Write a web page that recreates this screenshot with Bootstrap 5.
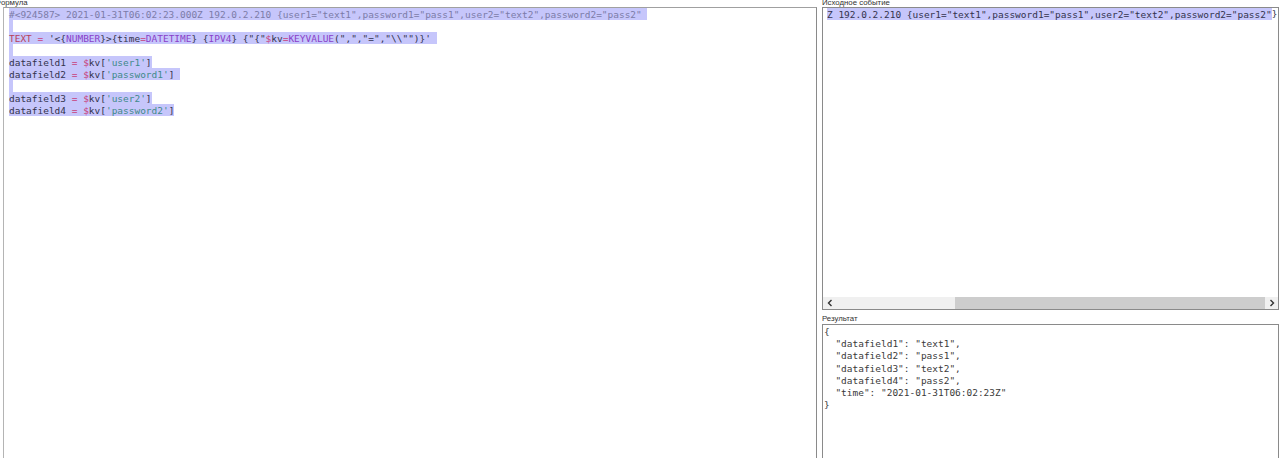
<!DOCTYPE html>
<html lang="ru"><head><meta charset="utf-8"><title>Формула</title>
<link href="https://cdn.jsdelivr.net/npm/bootstrap@5.3.0/dist/css/bootstrap.min.css" rel="stylesheet">
<style>
html,body{height:458px;overflow:hidden;background:#fff}
.shell{height:458px;overflow:hidden;align-items:stretch}
.pane-left{width:817px;flex:none;padding-left:3px}
.pane-right{width:457px;flex:none;margin-left:5px}
.cap{height:7px;font:7.8px/5px "Liberation Sans",sans-serif;color:#333;white-space:nowrap;overflow:visible}
.cap-l{margin-left:-8px}
.cap-res{height:14px;line-height:17px}
.editor{flex:1 1 0;min-height:0;border:1px solid #a0a0a0;border-bottom:0;font:9.47px/12px "DejaVu Sans Mono",monospace;color:#333;white-space:pre;overflow:hidden}
.ed-left{border-right:1px solid #8a8a8a;border-left:1px solid #b4b4b4;padding-left:5px}
.ln{height:12px;display:block}
.sel{background:#c6c6fb;display:inline-block;height:12px;line-height:13px;vertical-align:top}
.blank{width:4px}
.c-gray{color:#7c7ca8}.c-red{color:#b8405a}.c-pur{color:#8a3fc8}.c-pink{color:#c8407a}.c-teal{color:#3f8a8a}.c-ink{color:#33334d}
.source{flex:none;height:303px;border:1px solid #8a8a8a;display:flex;flex-direction:column;font:9.47px/12px "DejaVu Sans Mono",monospace;color:#33334d;white-space:pre}
.src-body{flex:1 1 0;padding:0 0 0 4px;overflow:hidden}
.sbar{height:12px;flex:none;background:#f0f0f0;display:flex;align-items:stretch}
.sb-btn{width:13px;flex:none;display:flex;align-items:center;justify-content:center}
.sb-track{flex:1 1 0;display:flex}
.sb-space{width:119px;flex:none}
.sb-thumb{flex:1 1 0;background:#cdcdcd}
.result{flex:1 1 0;min-height:0;border:1px solid #8a8a8a;border-bottom:0;padding:1px 0 0 1px;font:9.47px/12.2px "DejaVu Sans Mono",monospace;color:#3a3a3a;white-space:pre;overflow:hidden}
</style></head><body class="m-0 p-0">
<div class="shell d-flex">
  <div class="pane-left d-flex flex-column">
    <div class="cap cap-l">Формула</div>
    <div class="editor ed-left"><div><span class="ln"><span class="sel c-gray">#&lt;924587&gt; 2021-01-31T06:02:23.000Z 192.0.2.210 {user1="text1",password1="pass1",user2="text2",password2="pass2" </span></span><span class="ln"><span class="sel blank"></span></span><span class="ln"><span class="sel c-ink"><span class="c-red">TEXT</span> <span class="c-pink">=</span> '&lt;{<span class="c-pur">NUMBER</span>}&gt;{time<span class="c-pink">=</span><span class="c-pur">DATETIME</span>} {<span class="c-pur">IPV4</span>} {"{"<span class="c-pink">$</span>kv<span class="c-pink">=</span><span class="c-pur">KEYVALUE</span>(",","=","\\"")}' </span></span><span class="ln"><span class="sel blank"></span></span><span class="ln"><span class="sel c-ink">datafield1 <span class="c-pink">=</span> <span class="c-pink">$</span>kv[<span class="c-teal">'user1'</span>]</span></span><span class="ln"><span class="sel c-ink">datafield2 <span class="c-pink">=</span> <span class="c-pink">$</span>kv[<span class="c-teal">'password1'</span>] </span></span><span class="ln"><span class="sel blank"></span></span><span class="ln"><span class="sel c-ink">datafield3 <span class="c-pink">=</span> <span class="c-pink">$</span>kv[<span class="c-teal">'user2'</span>]</span></span><span class="ln"><span class="sel c-ink">datafield4 <span class="c-pink">=</span> <span class="c-pink">$</span>kv[<span class="c-teal">'password2'</span>]</span></span></div></div>
  </div>
  <div class="pane-right d-flex flex-column">
    <div class="cap">Исходное событие</div>
    <div class="source">
      <div class="src-body"><span class="sel">Z 192.0.2.210 {user1="text1",password1="pass1",user2="text2",password2="pass2"</span><span class="src-tail">}</span></div>
      <div class="sbar">
        <div class="sb-btn"><svg width="6" height="8" viewBox="0 0 6 8"><path d="M4.5 1 1.5 4l3 3" fill="none" stroke="#333" stroke-width="1.4"/></svg></div>
        <div class="sb-track"><div class="sb-space"></div><div class="sb-thumb"></div></div>
        <div class="sb-btn"><svg width="6" height="8" viewBox="0 0 6 8"><path d="M1.5 1 4.5 4l-3 3" fill="none" stroke="#333" stroke-width="1.4"/></svg></div>
      </div>
    </div>
    <div class="cap cap-res">Результат</div>
    <div class="result">{
  "datafield1": "text1",
  "datafield2": "pass1",
  "datafield3": "text2",
  "datafield4": "pass2",
  "time": "2021-01-31T06:02:23Z"
}</div>
  </div>
</div>
<script src="https://cdn.jsdelivr.net/npm/bootstrap@5.3.0/dist/js/bootstrap.bundle.min.js"></script>
</body></html>
